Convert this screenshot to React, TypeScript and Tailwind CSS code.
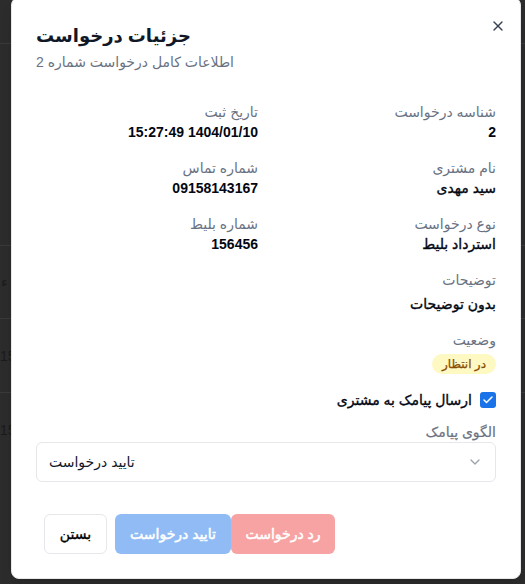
const fields = [
  { label: "شناسه درخواست", value: "2" },
  { label: "تاریخ ثبت", value: "1404/01/10 15:27:49" },
  { label: "نام مشتری", value: "سید مهدی" },
  { label: "شماره تماس", value: "09158143167" },
  { label: "نوع درخواست", value: "استرداد بلیط" },
  { label: "شماره بلیط", value: "156456" },
];

// medium weight for Persian text (fallback font only has regular/bold)
const medium = "font-normal [-webkit-text-stroke:0.35px]";

function Backdrop() {
  return (
    <div className="flex h-full flex-col text-sm text-[#1b1b1b]">
      <div className="h-[44px] border-b border-[#3a3a3a]" />
      <div className="h-[202px] border-b border-[#3a3a3a]" />
      <div className="flex h-[73px] items-center border-b border-[#3a3a3a] pl-[1px]">ء</div>
      <div className="flex h-[74px] items-center border-b border-[#3a3a3a]">15</div>
      <div className="flex h-[74px] items-center">15</div>
    </div>
  );
}

export default function App() {
  return (
    <main
      className="relative h-screen w-screen overflow-hidden bg-[#2c2c2c]"
      style={{ fontFamily: '"Liberation Sans", "DejaVu Sans", sans-serif' }}
    >
      <Backdrop />

      <section
        dir="rtl"
        className="absolute left-[11px] top-[-3px] flex w-[510px] flex-col rounded-lg border border-gray-200 bg-white p-6 text-gray-900 shadow-lg"
      >
        <button className="absolute left-auto right-[14px] top-[20px] flex h-4 w-4 items-center justify-center text-gray-700">
          <svg width="16" height="16" viewBox="0 0 24 24" fill="none" stroke="currentColor" strokeWidth="2" strokeLinecap="round">
            <path d="M18 6 6 18" />
            <path d="m6 6 12 12" />
          </svg>
        </button>

        <header className="flex flex-col gap-[1.5px] text-left">
          <h2 className="text-lg leading-7 font-semibold">جزئیات درخواست</h2>
          <p className="text-sm leading-5 text-gray-500">اطلاعات کامل درخواست شماره 2</p>
        </header>

        <div className="mt-[30px] grid grid-cols-2 gap-x-4 gap-y-4">
          {fields.map((f) => (
            <div key={f.label} className="flex flex-col">
              <span className="text-sm leading-5 text-gray-500">{f.label}</span>
              <span className={`text-sm leading-5 text-gray-950 ${/\d/.test(f.value) ? "font-semibold" : medium}`}>
                {f.value}
              </span>
            </div>
          ))}
        </div>

        <div className="mt-4 flex flex-col">
          <span className="text-sm leading-5 text-gray-500">توضیحات</span>
          <span className={`mt-1 text-sm leading-5 text-gray-950 ${medium}`}>بدون توضیحات</span>
        </div>

        <div className="mt-4 flex flex-col items-start">
          <span className="text-sm leading-5 text-gray-500">وضعیت</span>
          <span className="mt-1 rounded-full bg-yellow-100 px-2.5 py-0.5 text-xs leading-4 font-normal text-yellow-800 [-webkit-text-stroke:0.25px]">
            در انتظار
          </span>
        </div>

        <label className="mt-4 flex items-center gap-2">
          <span className="flex h-4 w-4 items-center justify-center rounded-[3px] bg-[#1a73e8]">
            <svg width="12" height="12" viewBox="0 0 24 24" fill="none" stroke="white" strokeWidth="3" strokeLinecap="round" strokeLinejoin="round">
              <path d="M20 6 9 17l-5-5" />
            </svg>
          </span>
          <span className={`text-sm leading-5 text-gray-950 ${medium}`}>ارسال پیامک به مشتری</span>
        </label>

        <span className="mt-3 text-sm leading-5 text-gray-500 [-webkit-text-stroke:0.2px]">الگوی پیامک</span>

        <div
          dir="ltr"
          className="mt-0 flex h-10 items-center justify-between rounded-md border border-gray-200 px-3 text-sm"
        >
          <span>تایید درخواست</span>
          <svg width="16" height="16" viewBox="0 0 24 24" fill="none" stroke="#9ca3af" strokeWidth="2" strokeLinecap="round" strokeLinejoin="round">
            <path d="m6 9 6 6 6-6" />
          </svg>
        </div>

        <footer dir="ltr" className="mt-8 flex pl-2">
          <button className={`h-10 w-[63px] rounded-md border border-gray-200 bg-white text-sm text-black ${medium} [-webkit-text-stroke:0.5px]`}>
            بستن
          </button>
          <button className="ml-2 h-10 w-[116px] rounded-md bg-[#90bbf5] text-sm font-normal text-white [-webkit-text-stroke:0.5px]">
            تایید درخواست
          </button>
          <button className="h-10 w-[104px] rounded-md bg-[#f7a3a3] text-sm font-normal text-white [-webkit-text-stroke:0.5px]">
            رد درخواست
          </button>
        </footer>
      </section>
    </main>
  );
}
